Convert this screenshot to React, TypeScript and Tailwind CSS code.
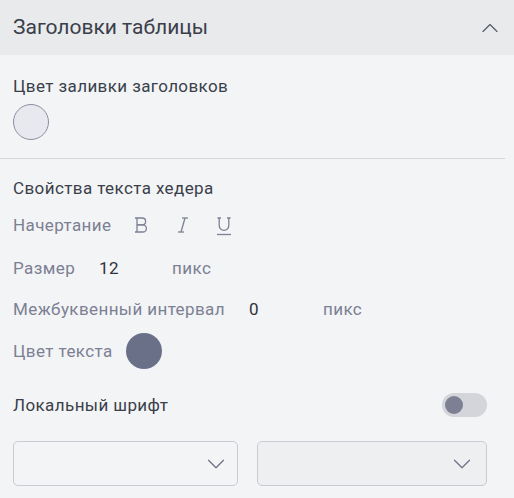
import { ChevronUp, ChevronDown } from 'lucide-react';

function Select({ disabled }: { disabled?: boolean }) {
  return (
    <div
      className={`h-[45px] rounded-[5px] border border-[#c9cbd2] flex items-center justify-end ${
        disabled ? 'flex-1 bg-[#eeeff1] pr-[9px]' : 'w-[225px] bg-[#f3f4f6] pr-[6px]'
      }`}
    >
      <ChevronDown size={30} strokeWidth={1} className="text-[#6f7386]" />
    </div>
  );
}

function BoldIcon() {
  return (
    <svg width="16" height="18" viewBox="0 0 16 18" fill="none" stroke="currentColor" strokeWidth="1.3">
      <path d="M1 2h7.2a3.4 3.4 0 0 1 0 6.8H3" />
      <path d="M3 8.8h5.8a3.6 3.6 0 0 1 0 7.2H1" />
      <path d="M3 2v14" />
    </svg>
  );
}

function ItalicIcon() {
  return (
    <svg width="10" height="18" viewBox="0 0 10 18" fill="none" stroke="currentColor" strokeWidth="1.3">
      <path d="M4 2h6" />
      <path d="M0 16h6" />
      <path d="M7 2 3 16" />
    </svg>
  );
}

function UnderlineIcon() {
  return (
    <svg width="16" height="20" viewBox="0 0 16 20" fill="none" stroke="currentColor" strokeWidth="1.3">
      <path d="M1.5 2h3.5M11 2h3.5" />
      <path d="M3.2 2v7.5a4.8 4.8 0 0 0 9.6 0V2" />
      <path d="M1 18.5h14" />
    </svg>
  );
}

export default function App() {
  return (
    <div className="w-[514px] h-[498px] bg-[#f3f4f6] font-['Roboto',sans-serif] overflow-hidden">
      {/* Header */}
      <div className="h-[55px] bg-[#e9eaec] flex items-center justify-between pl-[13px] pr-[10px]">
        <span className="text-[21px] text-[#3a3f4a]">Заголовки таблицы</span>
        <ChevronUp size={28} strokeWidth={1} className="text-[#555a66]" />
      </div>

      {/* Fill */}
      <div className="pl-[13px] pt-[20px] pb-[18px] text-[17px] tracking-[0.4px] leading-[22px]">
        <div className="text-[#3a3f4a]">Цвет заливки заголовков</div>
        <div className="mt-[7px] w-[36px] h-[36px] rounded-full bg-[#e8e9ee] border border-[#8b8fa0]" />
      </div>
      <div className="w-[505px] h-px bg-[#d6d7db]" />

      {/* Text props */}
      <div className="pl-[13px] pr-[27px] pt-[18px] text-[17px] tracking-[0.4px] leading-[22px]">
        <div className="h-[22px] text-[#3a3f4a]">Свойства текста хедера</div>

        <div className="h-[22px] flex items-center mt-[15px] text-[#7c8093]">
          <span>Начертание</span>
          <span className="ml-[23px] w-[44px] flex"><BoldIcon /></span>
          <span className="w-[38px] flex"><ItalicIcon /></span>
          <span className="flex mt-[2px]"><UnderlineIcon /></span>
        </div>

        <div className="h-[22px] flex items-center mt-[21px]">
          <span className="text-[#7c8093]">Размер</span>
          <span className="ml-[24px] w-[73px] text-[#2f333c]">12</span>
          <span className="text-[#7c8093]">пикс</span>
        </div>

        <div className="h-[22px] flex items-center mt-[19px]">
          <span className="text-[#7c8093]">Межбуквенный интервал</span>
          <span className="ml-[24px] w-[74px] text-[#2f333c]">0</span>
          <span className="text-[#7c8093]">пикс</span>
        </div>

        <div className="h-[36px] flex items-center mt-[13px]">
          <span className="text-[#7c8093]">Цвет текста</span>
          <div className="ml-[13px] w-[36px] h-[36px] rounded-full bg-[#6b7089]" />
        </div>

        <div className="h-[24px] flex items-center justify-between mt-[24px]">
          <span className="text-[#3a3f4a]">Локальный шрифт</span>
          <div className="w-[45px] h-[24px] rounded-full bg-[#d4d5db] flex items-center pl-[3px]">
            <div className="w-[18px] h-[18px] rounded-full bg-[#7c8092]" />
          </div>
        </div>

        <div className="flex gap-[19px] mt-[24px]">
          <Select />
          <Select disabled />
        </div>
      </div>
    </div>
  );
}
